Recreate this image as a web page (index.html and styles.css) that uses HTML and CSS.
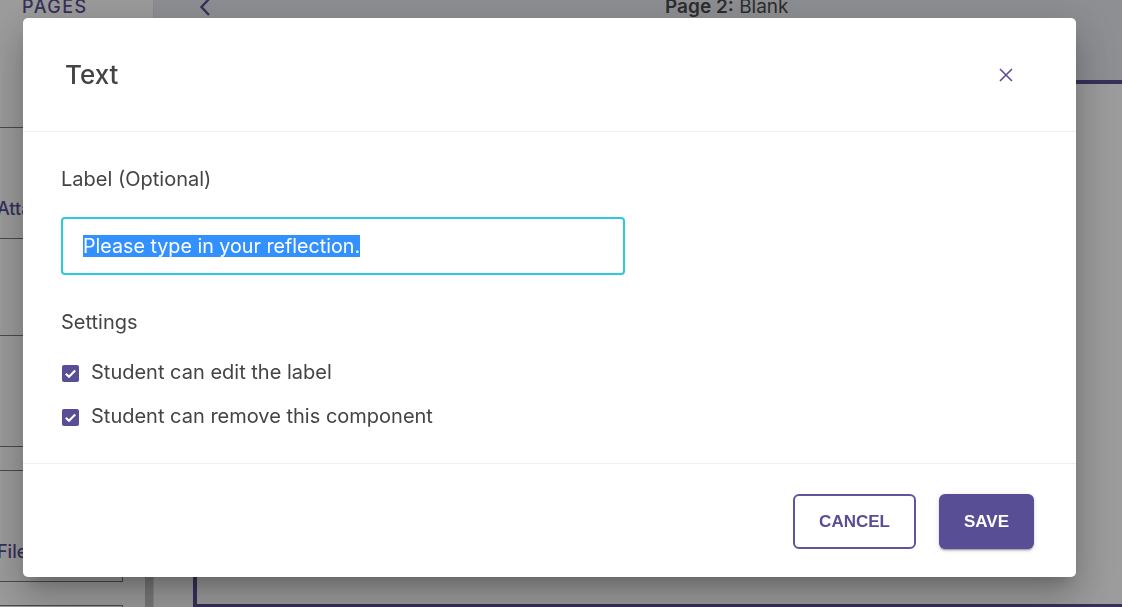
FILE: index.html
```html
<!DOCTYPE html>
<html lang="en">
<head>
  <meta charset="UTF-8">
  <meta name="viewport" content="width=device-width, initial-scale=1.0">
  <title>Text – component settings</title>
  <link rel="stylesheet" href="styles.css">
</head>
<body>

  <div class="page">
    <!-- Seitenliste links -->
    <aside class="sidebar">
      <div class="sidebar-list">
        <div class="sidebar-title">PAGES</div>
        <div class="page-card"><span>Attachment</span></div>
        <div class="page-card spaced center"><span>Text</span></div>
        <div class="page-card"><span>File Upload</span></div>
        <div class="page-card"><span>Blank</span></div>
      </div>
      <div class="sidebar-scroll"><div class="thumb"></div></div>
    </aside>

    <!-- Editor rechts -->
    <main class="main">
      <div class="topbar">
        <svg class="back" viewBox="0 0 12 18" fill="none" stroke="currentColor" stroke-width="2.4">
          <path d="M10 0 L2.5 8 L10 16"/>
        </svg>
        <div class="page-name"><b>Page 2:</b> Blank</div>
      </div>
      <div class="canvas-wrap">
        <div class="canvas"></div>
      </div>
    </main>
  </div>

  <!-- Dialog -->
  <div class="backdrop"></div>
  <div class="dialog" role="dialog">
    <div class="dialog-head">
      <h2>Text</h2>
      <button class="close" title="Close">
        <svg viewBox="0 0 14 14" width="14" height="14" stroke="currentColor" stroke-width="1.6">
          <path d="M1 1 L13 13 M13 1 L1 13"/>
        </svg>
      </button>
    </div>

    <div class="dialog-body">
      <label class="field-label">Label (Optional)</label>
      <div class="text-input"><span class="selected">Please type in your reflection.</span></div>

      <div class="section-title">Settings</div>
      <label class="check-row">
        <span class="check"><svg viewBox="0 0 17 17" width="17" height="17" fill="none" stroke="#fff" stroke-width="2.1"><path d="M3.8 8.7 L7 11.8 L13.2 5.4"/></svg></span>
        Student can edit the label
      </label>
      <label class="check-row">
        <span class="check"><svg viewBox="0 0 17 17" width="17" height="17" fill="none" stroke="#fff" stroke-width="2.1"><path d="M3.8 8.7 L7 11.8 L13.2 5.4"/></svg></span>
        Student can remove this component
      </label>
    </div>

    <div class="dialog-foot">
      <button class="btn btn-outline">CANCEL</button>
      <button class="btn btn-filled">SAVE</button>
    </div>
  </div>

</body>
</html>
```

FILE: styles.css
```css
/* Reset & Font */
* { box-sizing: border-box; margin: 0; padding: 0; }
html, body { height: 100%; }
body {
  overflow: hidden;
  font-family: Inter, "Noto Sans", sans-serif;
  color: #444;
  background: #fff;
}
.page {
  display: flex;
  height: 100vh;
}
/* Sidebar */
.sidebar {
  flex: 0 0 154px;
  display: flex;
  background: #fff;
  border-right: 1px solid #e4e4e4;
}
.sidebar-list {
  width: 123px;
}
.sidebar-title {
  height: 129px;
  margin-top: -2px;
  padding-left: 22px;
  font-size: 18px;
  line-height: 18px;
  font-weight: 500;
  letter-spacing: 1.5px;
  color: #5a4f96;
}
.page-card {
  height: 112px;
  display: flex;
  align-items: flex-end;
  padding-bottom: 18px;
  border: 1px solid #7a7a7a;
  border-left: none;
}
.page-card + .page-card { margin-top: 23px; }
.page-card.spaced { margin-top: 96px; }
.page-card.center { justify-content: center; }
.page-card span {
  margin-left: -3px;
  font-size: 18px;
  line-height: 22px;
  font-weight: 500;
  color: #5a4f96;
  white-space: nowrap;
}
.sidebar-scroll {
  margin-left: auto;
  width: 8px;
  display: flex;
  flex-direction: column;
}
.thumb {
  flex: 1;
  margin-top: 320px;
  background: #c6c6c6;
}
/* Editor */
.main {
  flex: 1;
  display: flex;
  flex-direction: column;
  overflow: hidden;
}
.topbar {
  flex: none;
  height: 80px;
  display: flex;
  align-items: flex-start;
  padding-left: 45px;
  background: #e8eaef;
}
.back {
  width: 12px;
  height: 18px;
  margin-top: -1px;
  color: #5a4f96;
}
.page-name {
  margin-left: 454px;
  margin-top: -3px;
  font-size: 19px;
  line-height: 19px;
  color: #4a4a4a;
  white-space: nowrap;
}
.page-name b { font-weight: 600; }
.canvas-wrap {
  padding-left: 39px;
}
.canvas {
  height: 528px;
  margin-right: -8px;
  border: 4px solid #5a4f96;
  background: #fff;
}
/* Dialog */
.backdrop {
  position: fixed;
  inset: 0;
  background: rgba(0,0,0,0.39);
}
.dialog {
  position: fixed;
  left: 23px;
  top: 18px;
  width: 1053px;
  background: #fff;
  border-radius: 5px;
  box-shadow: 0 11px 15px -7px rgba(0,0,0,.2), 0 24px 38px 3px rgba(0,0,0,.14), 0 9px 46px 8px rgba(0,0,0,.12);
}
.dialog-head {
  height: 114px;
  display: flex;
  align-items: center;
  justify-content: space-between;
  padding: 0 63px 0 42px;
  border-bottom: 1px solid #efefef;
}
.dialog-head h2 {
  font-size: 26px;
  line-height: 30px;
  font-weight: 500;
  color: #444;
}
.close {
  background: none;
  border: none;
  color: #5a4f96;
  cursor: pointer;
}
.close svg { display: block; }
.dialog-body {
  padding: 36px 38px 36px;
  font-size: 20px;
  line-height: 22px;
}
.field-label { display: block; }
.text-input {
  margin-top: 27px;
  width: 564px;
  height: 58px;
  display: flex;
  align-items: center;
  padding: 0 20px;
  border: 2px solid #2bcbd9;
  border-radius: 4px;
  font-size: 19.7px;
  color: #444;
}
.selected {
  background: #3390ff;
  color: #fff;
}
.section-title { margin-top: 36px; }
.check-row {
  margin-top: 28px;
  display: flex;
  align-items: flex-start;
  gap: 12px;
  cursor: pointer;
}
.check-row + .check-row { margin-top: 22px; }
.check {
  width: 17px;
  height: 17px;
  margin: 4px 0 0 1px;
  background: #574e96;
  border-radius: 2px;
}
.check svg { display: block; }
.dialog-foot {
  display: flex;
  justify-content: flex-end;
  gap: 23px;
  padding: 30px 42px 28px;
  border-top: 1px solid #efefef;
}
.btn {
  height: 55px;
  padding: 0 24px;
  border-radius: 6px;
  font-family: "Liberation Sans", Arial, sans-serif;
  font-size: 17px;
  font-weight: 700;
  cursor: pointer;
}
.btn-outline {
  background: #fff;
  border: 2px solid #5e55a0;
  color: #574e96;
}
.btn-filled {
  padding: 0 25px;
  background: #574e96;
  border: none;
  color: #fff;
  box-shadow: 0 3px 1px -2px rgba(0,0,0,.2), 0 2px 2px 0 rgba(0,0,0,.14), 0 1px 5px 0 rgba(0,0,0,.12);
}
```
